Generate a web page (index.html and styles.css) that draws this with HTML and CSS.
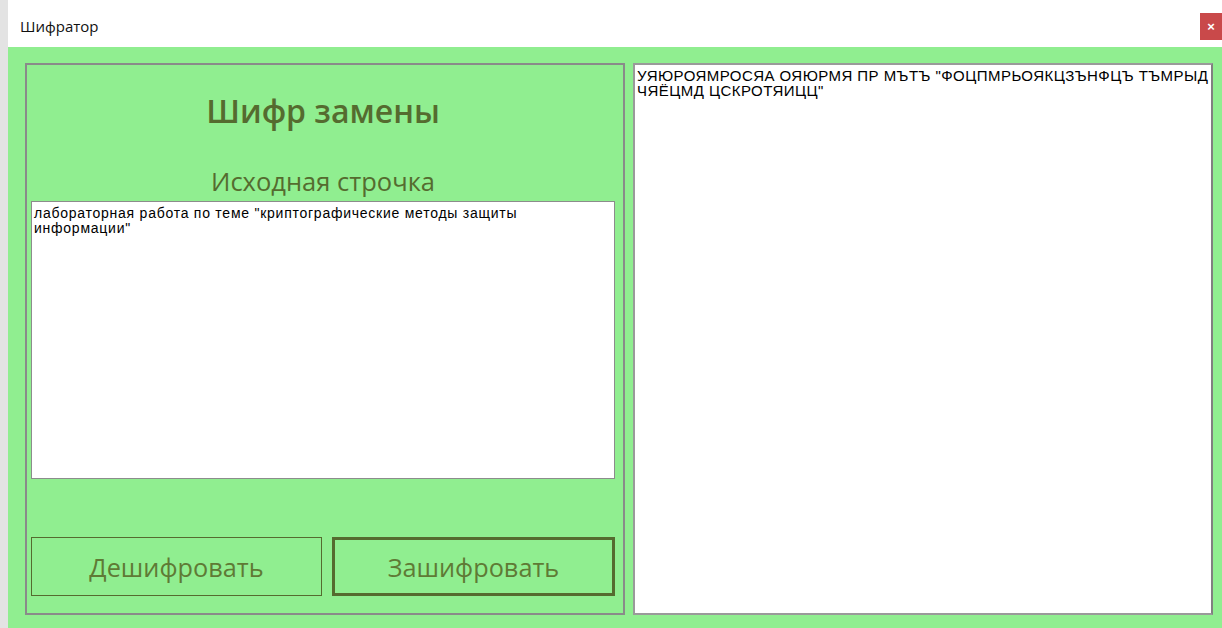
FILE: index.html
```html
<!DOCTYPE html>
<html lang="ru">
<head>
<meta charset="utf-8">
<title>Шифратор</title>
<link rel="stylesheet" href="styles.css">
</head>
<body>
<div class="window">
  <div class="titlebar">
    <span class="title">Шифратор</span>
    <button class="close" type="button">×</button>
  </div>
  <div class="client">
    <div class="panel">
      <h1 class="heading">Шифр замены</h1>
      <div class="label">Исходная строчка</div>
      <div class="source">лабораторная работа по теме "криптографические методы защиты информации"</div>
      <div class="buttons">
        <button class="btn" type="button">Дешифровать</button>
        <button class="btn btn-focus" type="button">Зашифровать</button>
      </div>
    </div>
    <div class="result">УЯЮРОЯМРОСЯА ОЯЮРМЯ ПР МЪТЪ "ФОЦПМРЬОЯКЦЗЪНФЦЪ ТЪМРЫД ЧЯЁЦМД ЦСКРОТЯИЦЦ"</div>
  </div>
</div>
</body>
</html>
```
FILE: styles.css
```css
* { box-sizing: border-box; }

html, body {
  margin: 0;
  padding: 0;
  width: 1222px;
  height: 628px;
  overflow: hidden;
  background: #ffffff;
}

.window {
  display: flex;
  flex-direction: column;
  height: 628px;
  border-left: 8px solid #e3e3e3;
  font-family: "Open Sans", "Noto Sans", sans-serif;
}

.titlebar {
  height: 47px;
  background: #ffffff;
  display: flex;
  align-items: flex-start;
  justify-content: space-between;
}

.title {
  font-family: "Open Sans", sans-serif;
  font-size: 15px;
  color: #111;
  padding: 16px 0 0 12px;
  line-height: 20px;
}

.close {
  margin-top: 13px;
  width: 22px;
  height: 27px;
  border: none;
  padding: 0;
  background: #c9494a;
  color: #fff;
  font-family: "Liberation Sans", sans-serif;
  font-size: 13px;
  font-weight: bold;
  line-height: 27px;
}

.client {
  flex: 1;
  background: #90ee90;
  display: flex;
  gap: 8px;
  padding: 16px 9px 13px 17px;
}

.panel {
  width: 600px;
  border: 2px solid #8a8a8a;
  display: flex;
  flex-direction: column;
  padding: 0 8px 17px 4px;
  color: #556b2f;
}

.heading {
  margin: 26px 0 0 0;
  text-align: center;
  font-size: 32px;
  font-weight: 600;
  line-height: 40px;
}

.label {
  margin-top: 35px;
  text-align: center;
  font-size: 25.5px;
  line-height: 30px;
}

.source {
  margin-top: 5px;
  height: 278px;
  background: #fff;
  border: 1px solid #8c8c8c;
  padding: 4px 2px;
  font-family: "Liberation Sans", sans-serif;
  font-size: 14px;
  line-height: 15px;
  letter-spacing: 0.75px;
  color: #000;
}

.buttons {
  margin-top: auto;
  display: flex;
  gap: 10px;
}

.btn {
  height: 59px;
  width: 291px;
  background: #90ee90;
  border: 1px solid #556b2f;
  color: #5f7a35;
  font-family: "Open Sans", sans-serif;
  font-size: 25.3px;
  padding: 0;
}

.btn-focus {
  width: 283px;
  border: 3px solid #556b2f;
}

.result {
  flex: 1;
  background: #fff;
  border: 2px solid #9a9a9a;
  border-right-color: #808080;
  padding: 3px 2px;
  font-family: "Liberation Sans", sans-serif;
  font-size: 15px;
  line-height: 15px;
  letter-spacing: 0.45px;
  color: #000;
}
```
